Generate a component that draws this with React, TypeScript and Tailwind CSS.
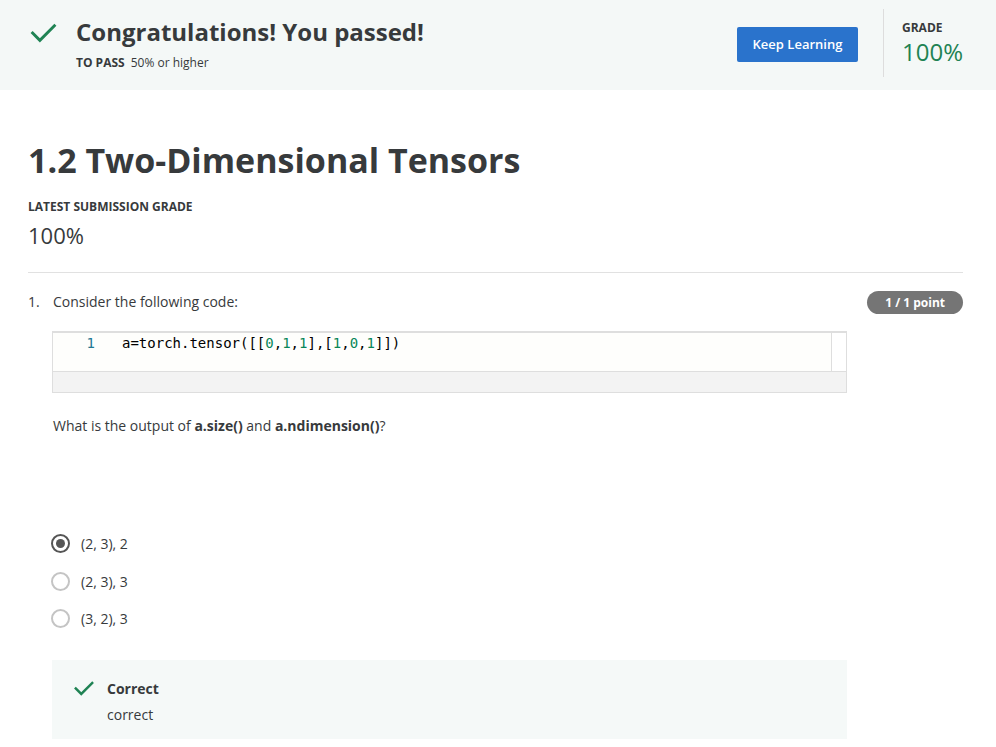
import React from "react";

const font = { fontFamily: '"Open Sans", "Liberation Sans", sans-serif' };
const mono = { fontFamily: '"DejaVu Sans Mono", monospace' };

function Check({ className, width = 2.6 }: { className?: string; width?: number }) {
	return (
		<svg viewBox="0 0 24 24" className={className} fill="none" stroke="#1f8354" strokeWidth={width} strokeLinecap="square">
			<path d="M3 12.5l6 6L21 6.5" />
		</svg>
	);
}

function Radio({ checked, label }: { checked?: boolean; label: string }) {
	return (
		<label className="flex h-[37.5px] items-center gap-[11px]">
			<span
				className={
					checked
						? "flex h-[19px] w-[19px] items-center justify-center rounded-full border-2 border-[#555]"
						: "flex h-[19px] w-[19px] items-center justify-center rounded-full border-2 border-[#c4c4c4]"
				}
			>
				{checked && <span className="h-[9px] w-[9px] rounded-full bg-[#555]" />}
			</span>
			<span className="text-[14px] text-[#373a3c]">{label}</span>
		</label>
	);
}

export default function App() {
	return (
		<div style={font} className="min-h-screen bg-white text-[#373a3c]">
			<header className="flex h-[90px] items-start bg-[#f4f8f7] pl-[29px] pr-[33px]">
				<Check className="mt-[18px] h-[29px] w-[29px]" width={2.4} />
				<div className="ml-[18px] mt-[14px]">
					<h2 className="text-[24px] font-bold leading-[36px] text-[#373a3c]">Congratulations! You passed!</h2>
					<p className="mt-[4px] text-[12px] leading-[18px]">
						<span className="font-bold">TO PASS</span>
						<span className="ml-[6px]">50% or higher</span>
					</p>
				</div>
				<div className="ml-auto flex items-start">
					<button className="mt-[27px] h-[35px] w-[121px] rounded-[2px] bg-[#2a73cc] text-[13px] font-semibold text-white">
						Keep Learning
					</button>
					<div className="ml-[25px] mt-[9px] h-[68px] w-px bg-[#dddddd]" />
					<div className="ml-[18px] mt-[19px]">
						<div className="text-[12px] font-bold leading-[18px]">GRADE</div>
						<div className="text-[24px] leading-[30px] text-[#1f8354]">100%</div>
					</div>
				</div>
			</header>

			<main className="pl-[28px] pr-[33px]">
				<h1 className="mt-[47px] text-[34px] font-bold leading-[46px]">1.2 Two-Dimensional Tensors</h1>
				<div className="mt-[15px] text-[12px] font-bold leading-[18px]">LATEST SUBMISSION GRADE</div>
				<div className="mt-[4px] text-[22px] leading-[30px]">100%</div>
				<div className="mt-[22px] h-px bg-[#e1e1e1]" />

				<div className="mt-[18px] flex items-start">
					<span className="w-[25px] text-[14px] leading-[21px]">1.</span>
					<div className="flex-1">
						<div className="flex items-start justify-between">
							<p className="text-[14px] leading-[21px]">Consider the following code:</p>
							<span className="flex h-[23px] items-center rounded-full bg-[#757575] px-[18px] text-[12px] font-bold text-white">
								1 / 1 point
							</span>
						</div>
						<div className="ml-[-1px] mt-[17px] w-[795px] border-2 border-b-[1px] border-l-[1px] border-r-[1px] border-[#dedede]">
							<div className="flex h-[38px] bg-[#fefefc]">
								<span className="w-[42px] pt-[1px] text-right text-[14px] leading-[18px] text-[#237893]" style={mono}>
									1
								</span>
								<span className="ml-[27px] flex-1 pt-[1px] text-[14px] leading-[18px] text-black" style={mono}>
									a=torch.tensor([[<span className="text-[#098658]">0</span>,<span className="text-[#098658]">1</span>,
									<span className="text-[#098658]">1</span>],[<span className="text-[#098658]">1</span>,
									<span className="text-[#098658]">0</span>,<span className="text-[#098658]">1</span>]])
								</span>
								<span className="w-[15px] border-l border-[#dedede] bg-white" />
							</div>
							<div className="h-[21px] border-t border-[#dedede] bg-[#f3f3f3]" />
						</div>
						<p className="mt-[22px] text-[14px] leading-[21px]">
							What is the output of <b>a.size()</b> and <b>a.ndimension()</b>?
						</p>
						<div className="ml-[-2px] mt-[89px]">
							<Radio checked label="(2, 3), 2" />
							<Radio label="(2, 3), 3" />
							<Radio label="(3, 2), 3" />
						</div>
						<div className="ml-[-1px] mt-[22px] w-[795px] bg-[#f5f9f8] pb-[14px] pl-[21px] pt-[18px]">
							<div className="flex items-start">
								<Check className="mt-[-1px] h-[22px] w-[22px]" />
								<div className="ml-[12px]">
									<div className="text-[14px] font-bold leading-[22px]">Correct</div>
									<div className="mt-[4px] text-[14px] leading-[21px]">correct</div>
								</div>
							</div>
						</div>
					</div>
				</div>
			</main>
		</div>
	);
}
